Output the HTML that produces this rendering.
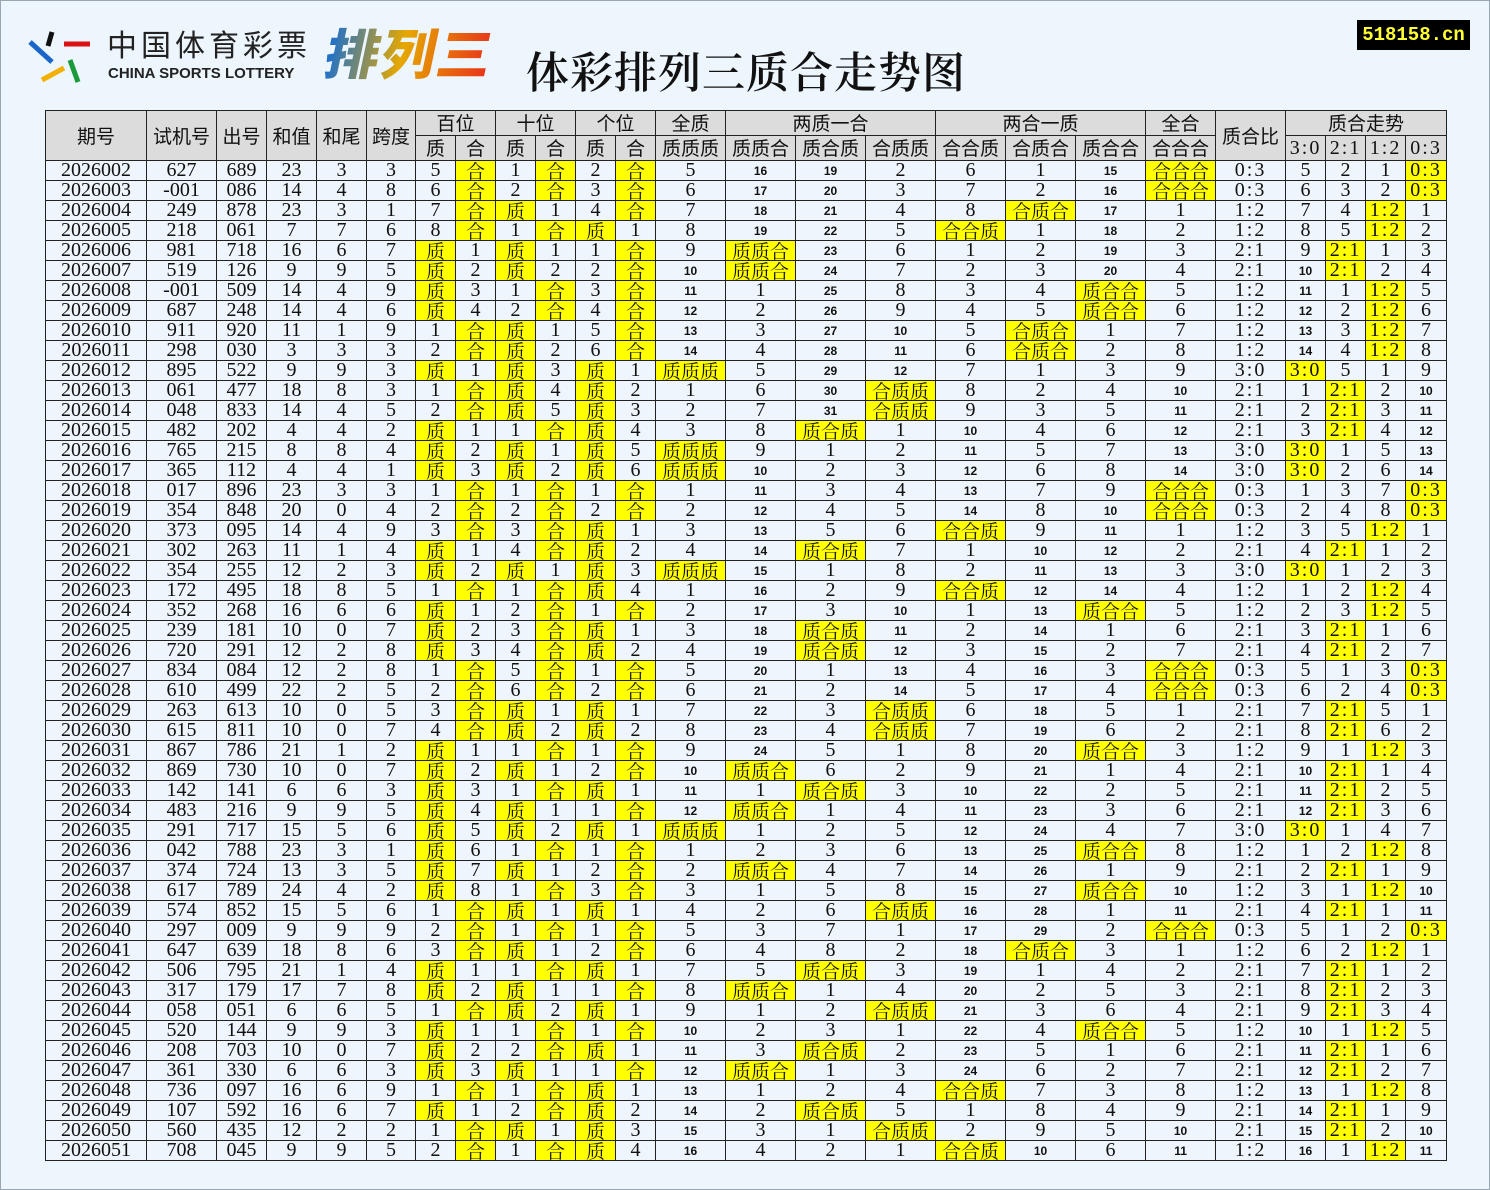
<!DOCTYPE html>
<html><head><meta charset="utf-8">
<style>
html,body{margin:0;padding:0}
body{width:1490px;height:1190px;background:#edf5fd;position:relative;overflow:hidden;font-family:"Liberation Serif","Noto Serif CJK SC",serif}
#frame{position:absolute;left:0;top:0;width:1488px;height:1188px;border:1px solid #9aa6b2}
#title{position:absolute;left:526px;top:44px;font-size:43px;font-family:"Noto Serif CJK SC",serif;font-weight:600;letter-spacing:1px;line-height:54px;color:#111}
#badge{position:absolute;left:1357px;top:20px;width:113px;height:30px;background:#000;color:#ffff33;font:bold 19px "Liberation Mono",monospace;line-height:30px;text-align:center}
table{position:absolute;left:45px;top:110px;border-collapse:collapse;table-layout:fixed;width:1401px}
td{border:1px solid #222;padding:0;text-align:center;white-space:nowrap;overflow:hidden}
thead td{background:#dcdcdc;font-family:"Noto Sans CJK SC",sans-serif;font-size:19px;height:24px;line-height:22px;color:#111}
tbody td{background:#eef5fc;font-size:20px;height:19px;line-height:19px;color:#111}
tbody td.y{background:#ffff00;font-family:"Noto Serif CJK SC","Liberation Serif",serif;font-size:19px}
tbody td.s{font:bold 12px "Liberation Sans",sans-serif}
tbody tr{height:20px}
.r{letter-spacing:2px}
</style></head><body>
<div id="frame"></div>
<svg style="position:absolute;left:20px;top:10px" width="480" height="90">
<line x1="32" y1="22" x2="28" y2="36" stroke="#111" stroke-width="5"/>
<line x1="44" y1="34" x2="70" y2="34" stroke="#d11" stroke-width="5"/>
<line x1="10" y1="32" x2="32" y2="52" stroke="#1a66c8" stroke-width="5"/>
<line x1="22" y1="70" x2="44" y2="58" stroke="#f3b000" stroke-width="5"/>
<line x1="50" y1="50" x2="58" y2="72" stroke="#1a9a3a" stroke-width="5"/>
<text x="87" y="46" font-family="Noto Sans CJK SC,sans-serif" font-size="30" fill="#222" letter-spacing="4">中国体育彩票</text>
<text x="88" y="68" font-family="Liberation Sans,sans-serif" font-weight="bold" font-size="15" fill="#222">CHINA SPORTS LOTTERY</text>
<defs><linearGradient id="g" x1="0" x2="1"><stop offset="0" stop-color="#1a6fd0"/><stop offset="0.45" stop-color="#e6a800"/><stop offset="1" stop-color="#e8301a"/></linearGradient></defs>
<text x="302" y="64" font-family="Noto Sans CJK SC,sans-serif" font-weight="900" font-size="54" fill="url(#g)" transform="skewX(-12)" transform-origin="302 64" letter-spacing="2">排列三</text>
</svg>
<div id="title">体彩排列三质合走势图</div>
<div id="badge">518158.cn</div>
<table id="t">
<colgroup>
<col style="width:101px"><col style="width:70px"><col style="width:50px"><col style="width:50px"><col style="width:50px"><col style="width:49px">
<col style="width:40px"><col style="width:40px"><col style="width:40px"><col style="width:40px"><col style="width:40px"><col style="width:40px">
<col style="width:70px"><col style="width:70px"><col style="width:70px"><col style="width:70px"><col style="width:70px"><col style="width:70px"><col style="width:70px"><col style="width:70px"><col style="width:70px">
<col style="width:40px"><col style="width:40px"><col style="width:40px"><col style="width:41px">
</colgroup>
<thead>
<tr><td rowspan="2">期号</td><td rowspan="2">试机号</td><td rowspan="2">出号</td><td rowspan="2">和值</td><td rowspan="2">和尾</td><td rowspan="2">跨度</td>
<td colspan="2">百位</td><td colspan="2">十位</td><td colspan="2">个位</td><td>全质</td><td colspan="3">两质一合</td><td colspan="3">两合一质</td><td>全合</td><td rowspan="2">质合比</td><td colspan="4">质合走势</td></tr>
<tr><td>质</td><td>合</td><td>质</td><td>合</td><td>质</td><td>合</td><td>质质质</td><td>质质合</td><td>质合质</td><td>合质质</td><td>合合质</td><td>合质合</td><td>质合合</td><td>合合合</td>
<td class="r" style="font-family:'Liberation Serif',serif;font-size:20px">3:0</td><td class="r" style="font-family:'Liberation Serif',serif;font-size:20px">2:1</td><td class="r" style="font-family:'Liberation Serif',serif;font-size:20px">1:2</td><td class="r" style="font-family:'Liberation Serif',serif;font-size:20px">0:3</td></tr>
</thead>
<tbody id="b"></tbody>
</table>
<script>
var raw="627 689,-001 086,249 878,218 061,981 718,519 126,-001 509,687 248,911 920,298 030,895 522,061 477,048 833,482 202,765 215,365 112,017 896,354 848,373 095,302 263,354 255,172 495,352 268,239 181,720 291,834 084,610 499,263 613,615 811,867 786,869 730,142 141,483 216,291 717,042 788,374 724,617 789,574 852,297 009,647 639,506 795,317 179,058 051,520 144,208 703,361 330,736 097,107 592,560 435,708 045".split(",");
var P={1:1,2:1,3:1,5:1,7:1};
var pc=[4,0,0,0,1,0];
var pats=["zzz","zzh","zhz","hzz","hhz","hzh","zhh","hhh"];
var patc=[4,15,18,1,5,0,14,0];
var rat=["3:0","2:1","1:2","0:3"];
var rc=[4,1,0,0];
var lab=function(s){return s.replace(/z/g,"质").replace(/h/g,"合")};
var h="";
function cell(v,hit){if(hit)return '<td class="y">'+v+'</td>';return '<td'+(v>=10?' class="s"':'')+'>'+v+'</td>';}
raw.forEach(function(r,i){
 var a=r.split(" "),o=a[1],d=o.split("").map(Number);
 var sum=d[0]+d[1]+d[2],span=Math.max.apply(0,d)-Math.min.apply(0,d);
 var p=d.map(function(x){return P[x]?"z":"h"}).join("");
 var n=(p.match(/z/g)||[]).length;
 var row='<tr><td>'+(2026002+i)+'</td><td>'+a[0]+'</td><td>'+o+'</td><td>'+sum+'</td><td>'+(sum%10)+'</td><td>'+span+'</td>';
 for(var k=0;k<3;k++){
  var isz=p[k]=="z";
  if(isz){pc[2*k]=0;row+=cell("质",1);pc[2*k+1]++;row+=cell(pc[2*k+1]);}
  else{pc[2*k]++;row+=cell(pc[2*k]);pc[2*k+1]=0;row+=cell("合",1);}
 }
 pats.forEach(function(s,j){if(s==p){patc[j]=0;row+=cell(lab(s),1);}else{patc[j]++;row+=cell(patc[j]);}});
 var ri=3-n;
 row+='<td class="r">'+rat[ri]+'</td>';
 rat.forEach(function(s,j){if(j==ri){rc[j]=0;row+='<td class="y r" style="font-family:\'Liberation Serif\',serif;font-size:20px">'+s+'</td>';}else{rc[j]++;row+=cell(rc[j]);}});
 h+=row+'</tr>';
});
document.getElementById("b").innerHTML=h;
</script>
</body></html>
